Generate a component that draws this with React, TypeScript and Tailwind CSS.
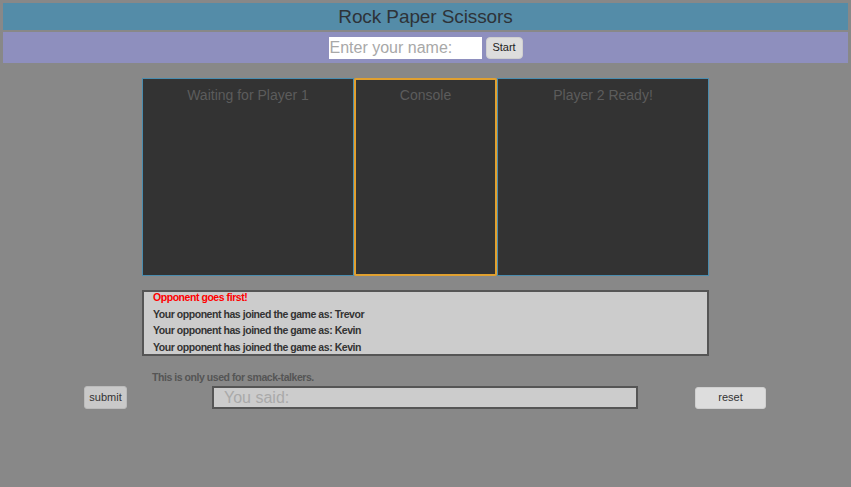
import React from "react";

export default function App() {
  const font = { fontFamily: '"Liberation Sans", Arial, sans-serif' };
  return (
    <div className="min-h-[487px] w-full bg-[#888888] pt-[3px]" style={font}>
      <div className="mx-[3px] h-[27px] bg-[#548ca8] flex items-center justify-center text-[19px] text-[#2e3338] leading-none tracking-[-0.1px]">
        Rock Paper Scissors
      </div>
      <div className="mx-[3px] mt-[2px] h-[31px] bg-[#8e8fbe] flex items-center justify-center gap-[4px]">
        <input
          className="w-[153px] h-[22px] bg-white px-[1px] text-[16px] text-[#333] placeholder:text-[#a8a8a8] outline-none"
          placeholder="Enter your name:"
          style={font}
        />
        <button className="w-[37px] h-[22px] bg-[#dddddd] rounded-[4px] border border-[#cfcfcf] text-[11px] text-[#222] leading-none">
          Start
        </button>
      </div>

      <div className="mx-auto mt-[15px] w-[567px] h-[198px] flex">
        <div className="w-[212px] h-full bg-[#333333] border border-[#4a8cae] flex justify-center pt-[8px] text-[14px] text-[#5c5c5c] leading-[17px]">
          Waiting for Player 1
        </div>
        <div className="w-[143px] h-full bg-[#333333] border-2 border-[#e0a030] rounded-[2px] flex justify-center pt-[7px] text-[14px] text-[#5c5c5c] leading-[17px]">
          Console
        </div>
        <div className="flex-1 h-full bg-[#333333] border border-[#4a8cae] flex justify-center pt-[8px] text-[14px] text-[#5c5c5c] leading-[17px]">
          Player 2 Ready!
        </div>
      </div>

      <div className="mx-auto mt-[14px] w-[567px] h-[66px] bg-[#cccccc] border-2 border-[#555555] overflow-hidden">
        <div className="mt-[-3px] pl-[9px] text-[10.5px] font-bold leading-[16.5px] tracking-[-0.45px] text-[#333]">
          <div className="text-[#ff0000]">Opponent goes first!</div>
          <div>Your opponent has joined the game as: Trevor</div>
          <div>Your opponent has joined the game as: Kevin</div>
          <div>Your opponent has joined the game as: Kevin</div>
        </div>
      </div>

      <div className="mt-[15px] pl-[152px] text-[10.5px] font-bold leading-[13px] tracking-[-0.45px] text-[#555555]">
        This is only used for smack-talkers.
      </div>

      <div className="mt-[2px] flex items-center pl-[84px]">
        <button className="w-[43px] h-[23px] bg-[#c9c9c9] rounded-[3px] border border-[#bbbbbb] text-[11px] text-[#333] leading-none">
          submit
        </button>
        <input
          className="ml-[85px] w-[426px] h-[23px] bg-[#cccccc] border-2 border-[#555555] px-[10px] text-[16px] text-[#333] placeholder:text-[#a9a9a9] outline-none"
          placeholder="You said:"
          style={font}
        />
        <button className="ml-[57px] w-[71px] h-[22px] bg-[#dddddd] rounded-[3px] border border-[#cfcfcf] text-[11px] text-[#333] leading-none">
          reset
        </button>
      </div>
    </div>
  );
}
